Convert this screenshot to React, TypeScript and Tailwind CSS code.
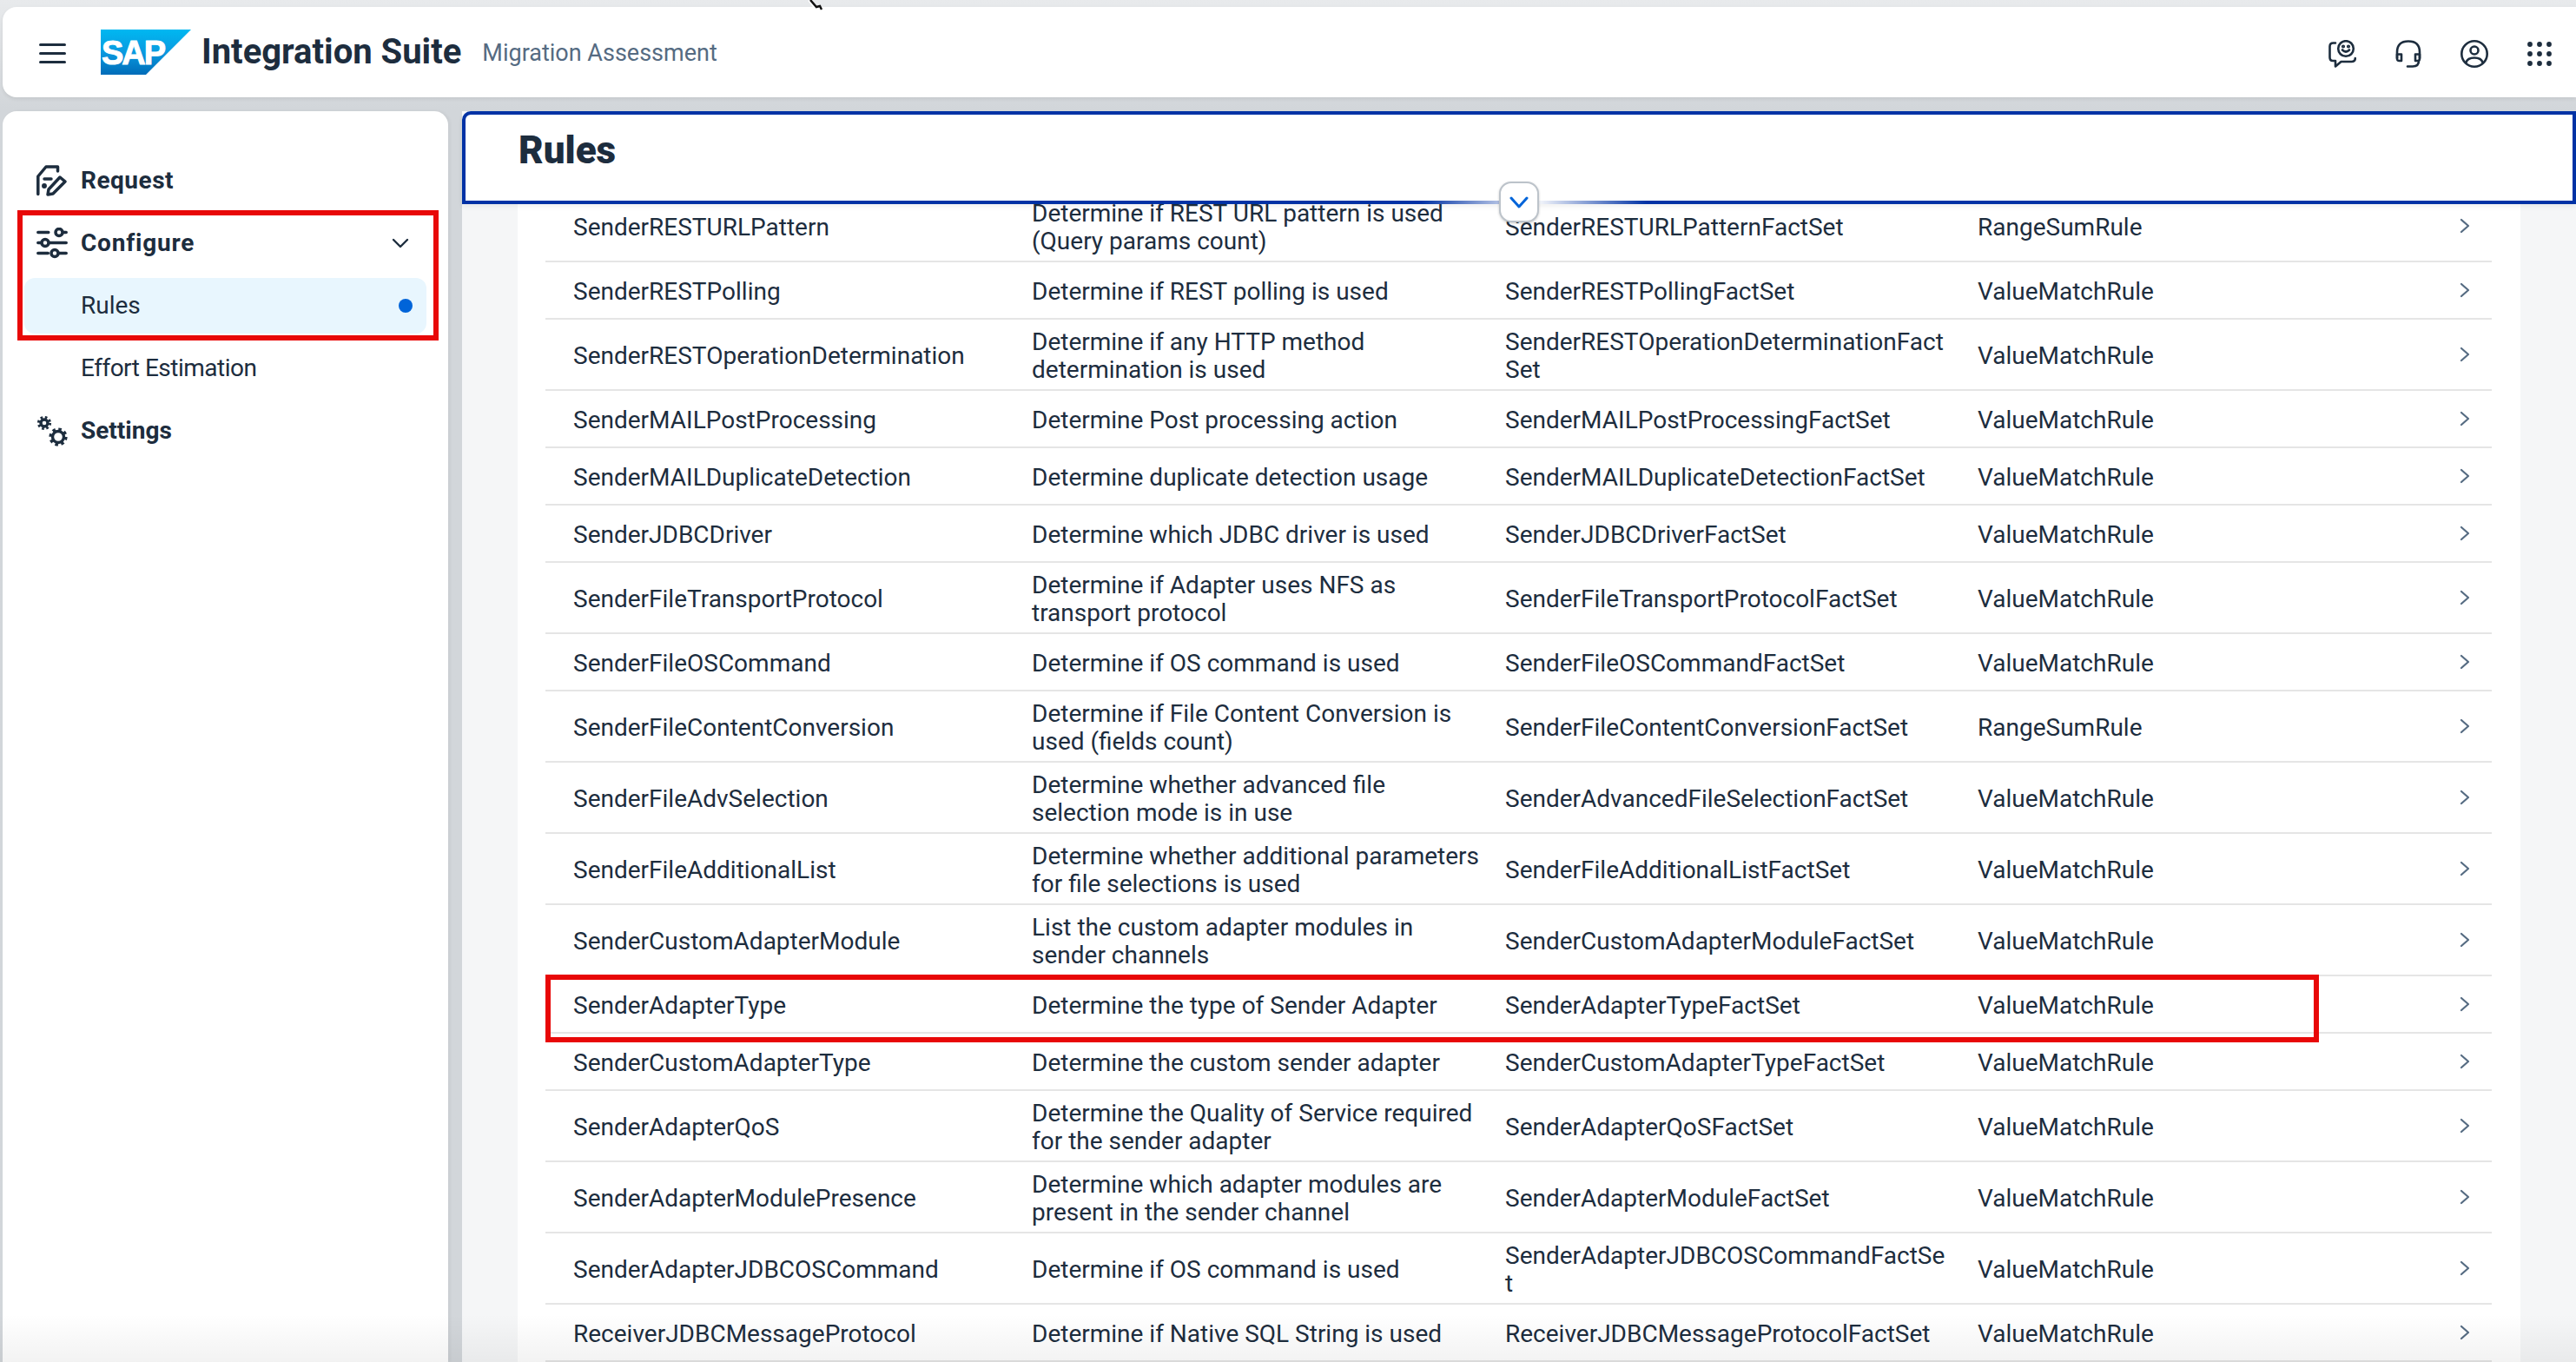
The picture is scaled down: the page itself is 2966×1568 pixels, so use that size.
import React from "react";

type Row = { a: string; b: string; c: string; d: string; tall?: boolean; mark?: boolean };

const rows: Row[] = [
  { a: "SenderRESTURLPattern", b: "Determine if REST URL pattern is used\n(Query params count)", c: "SenderRESTURLPatternFactSet", d: "RangeSumRule", tall: true },
  { a: "SenderRESTPolling", b: "Determine if REST polling is used", c: "SenderRESTPollingFactSet", d: "ValueMatchRule" },
  { a: "SenderRESTOperationDetermination", b: "Determine if any HTTP method\ndetermination is used", c: "SenderRESTOperationDeterminationFact\nSet", d: "ValueMatchRule", tall: true },
  { a: "SenderMAILPostProcessing", b: "Determine Post processing action", c: "SenderMAILPostProcessingFactSet", d: "ValueMatchRule" },
  { a: "SenderMAILDuplicateDetection", b: "Determine duplicate detection usage", c: "SenderMAILDuplicateDetectionFactSet", d: "ValueMatchRule" },
  { a: "SenderJDBCDriver", b: "Determine which JDBC driver is used", c: "SenderJDBCDriverFactSet", d: "ValueMatchRule" },
  { a: "SenderFileTransportProtocol", b: "Determine if Adapter uses NFS as\ntransport protocol", c: "SenderFileTransportProtocolFactSet", d: "ValueMatchRule", tall: true },
  { a: "SenderFileOSCommand", b: "Determine if OS command is used", c: "SenderFileOSCommandFactSet", d: "ValueMatchRule" },
  { a: "SenderFileContentConversion", b: "Determine if File Content Conversion is\nused (fields count)", c: "SenderFileContentConversionFactSet", d: "RangeSumRule", tall: true },
  { a: "SenderFileAdvSelection", b: "Determine whether advanced file\nselection mode is in use", c: "SenderAdvancedFileSelectionFactSet", d: "ValueMatchRule", tall: true },
  { a: "SenderFileAdditionalList", b: "Determine whether additional parameters\nfor file selections is used", c: "SenderFileAdditionalListFactSet", d: "ValueMatchRule", tall: true },
  { a: "SenderCustomAdapterModule", b: "List the custom adapter modules in\nsender channels", c: "SenderCustomAdapterModuleFactSet", d: "ValueMatchRule", tall: true },
  { a: "SenderAdapterType", b: "Determine the type of Sender Adapter", c: "SenderAdapterTypeFactSet", d: "ValueMatchRule", mark: true },
  { a: "SenderCustomAdapterType", b: "Determine the custom sender adapter", c: "SenderCustomAdapterTypeFactSet", d: "ValueMatchRule" },
  { a: "SenderAdapterQoS", b: "Determine the Quality of Service required\nfor the sender adapter", c: "SenderAdapterQoSFactSet", d: "ValueMatchRule", tall: true },
  { a: "SenderAdapterModulePresence", b: "Determine which adapter modules are\npresent in the sender channel", c: "SenderAdapterModuleFactSet", d: "ValueMatchRule", tall: true },
  { a: "SenderAdapterJDBCOSCommand", b: "Determine if OS command is used", c: "SenderAdapterJDBCOSCommandFactSe\nt", d: "ValueMatchRule", tall: true },
  { a: "ReceiverJDBCMessageProtocol", b: "Determine if Native SQL String is used", c: "ReceiverJDBCMessageProtocolFactSet", d: "ValueMatchRule" },
];

const stroke = { fill: "none", stroke: "#1d2d3e", strokeLinecap: "round", strokeLinejoin: "round" } as const;

function RequestIcon() {
  return (
    <svg width="36" height="36" viewBox="0 0 36 36" {...stroke} strokeWidth="3.500">
      <path d="M1.800 33.500V13L11 2h13.500v5" />
      <path d="M9 16h8" />
      <circle cx="9" cy="24" r="1.200" fill="#1d2d3e" />
      <path d="M13 34l1-6 13-14 6 5-14 14z" />
    </svg>
  );
}

function ConfigureIcon() {
  return (
    <svg width="36" height="36" viewBox="0 0 36 36" {...stroke} strokeWidth="3.500">
      <path d="M1.800 5.500h12M31 5.500h3.200" />
      <circle cx="26" cy="5.500" r="4" />
      <path d="M1.800 17.500h3.500M15 17.500h19.200" />
      <circle cx="10" cy="17.500" r="4" />
      <path d="M1.800 29.500h11.500M26 29.500h8.200" />
      <circle cx="21" cy="29.500" r="4" />
    </svg>
  );
}

function Gear({ cx, cy, r }: { cx: number; cy: number; r: number }) {
  const outer = r + 1;
  const circ = 2 * Math.PI * outer;
  return (
    <g fill="none" stroke="#1d2d3e">
      <circle cx={cx} cy={cy} r={r - 1.500} strokeWidth="3.400" />
      <circle cx={cx} cy={cy} r={outer} strokeWidth="3.200" strokeDasharray={`${circ / 16} ${circ / 16}`} />
    </g>
  );
}

function SettingsIcon() {
  return (
    <svg width="36" height="36" viewBox="0 0 36 36">
      <Gear cx={9} cy={9} r={5.500} />
      <Gear cx={25} cy={25} r={8} />
    </svg>
  );
}

function FeedbackIcon() {
  return (
    <svg width="32" height="32" viewBox="0 0 32 32" {...stroke} strokeWidth="2.600">
      <path d="M8 3.500H5.500Q1.500 3.500 1.500 7.500V20Q1.500 24 5 24H8V30.500L14.500 25H26.500Q30.800 25 30.800 21" />
      <circle cx="20" cy="10" r="8.800" />
      <path d="M16 11.500q4 4 8 0" />
      <circle cx="17" cy="7.500" r="0.800" fill="#1d2d3e" />
      <circle cx="23" cy="7.500" r="0.800" fill="#1d2d3e" />
    </svg>
  );
}

function HeadsetIcon() {
  return (
    <svg width="30" height="32" viewBox="0 0 30 32" {...stroke} strokeWidth="2.600">
      <path d="M2 21V14Q2 1.500 15 1.500T28 14V21" />
      <path d="M2 16.500H7V24H4.500Q2 24 2 21.500Z" />
      <path d="M28 16.500H23V24H25.500Q28 24 28 21.500Z" />
      <path d="M27 24Q27 30.500 20 30.500H14" />
    </svg>
  );
}

function UserIcon() {
  return (
    <svg width="32" height="32" viewBox="0 0 32 32" {...stroke} strokeWidth="2.600">
      <circle cx="16" cy="16" r="14.700" />
      <circle cx="16" cy="12" r="4.500" />
      <path d="M6.500 26Q8 20.500 16 20.500T25.500 26" />
    </svg>
  );
}

function GridIcon() {
  const pos = [3, 14, 25];
  return (
    <svg width="28" height="28" viewBox="0 0 28 28" fill="#1d2d3e">
      {pos.flatMap((y) => pos.map((x) => <circle key={`${x}-${y}`} cx={x} cy={y} r="2.900" />))}
    </svg>
  );
}

function SapLogo() {
  return (
    <div className="relative h-[52px] w-[104px] shrink-0">
      <svg width="104" height="52" viewBox="0 0 104 52" className="block">
        <defs>
          <linearGradient id="sap" x1="0" y1="0" x2="0" y2="1">
            <stop offset="0" stopColor="#00b8f1" />
            <stop offset="0.5" stopColor="#0a9ae0" />
            <stop offset="1" stopColor="#006cb8" />
          </linearGradient>
        </defs>
        <polygon points="0,0 104,0 52,52 0,52" fill="url(#sap)" />
      </svg>
      <span className="absolute left-[1px] top-[6px] text-[38px] leading-[42px] font-bold tracking-[-2px] text-white [-webkit-text-stroke:1px_white] font-['Liberation_Sans',sans-serif]">
        SAP
      </span>
    </div>
  );
}

function NavItem({ icon, label, track }: { icon: React.ReactNode; label: string; track?: string }) {
  return (
    <div className="flex h-[64px] items-center pl-[14px]">
      <div className="flex w-[51px] shrink-0 items-center">{icon}</div>
      <span className={`text-[28px] font-bold leading-none ${track ?? ""}`}>{label}</span>
    </div>
  );
}

function TableRow({ row }: { row: Row }) {
  return (
    <div className={`relative grid grid-cols-[560px_545px_544px_1fr] items-center border-b-2 border-[#e5e5e5] text-[28px] leading-[32px] ${row.tall ? "h-[82px]" : "h-[66px]"}`}>
      <div className="pl-[32px] pt-[4px]">{row.a}</div>
      <div className="whitespace-pre-line pt-[4px]">{row.b}</div>
      <div className="whitespace-pre-line pt-[4px]">{row.c}</div>
      <div className="flex items-center justify-between pr-[25px]">
        <span className="pt-[4px]">{row.d}</span>
        <svg width="12" height="18" viewBox="0 0 12 18" fill="none" stroke="#556b82" strokeWidth="2.200" strokeLinecap="round" strokeLinejoin="round">
          <path d="M2 2l8 7-8 7" />
        </svg>
      </div>
      {row.mark && <div className="absolute -top-[2px] left-0 z-10 h-[78px] w-[2042px] border-[6px] border-[#e80808]" />}
    </div>
  );
}

export default function App() {
  return (
    <div className="relative flex h-[1568px] w-full flex-col overflow-hidden bg-[#d2d6da] bg-linear-to-b from-[#e8eaec] to-[#d2d6da] to-[125px] pt-[8px] pl-[3px] text-[#1d2d3e] font-['Roboto',sans-serif]">
      <svg width="18" height="14" viewBox="0 0 18 14" className="absolute left-[930px] top-0">
        <path d="M2 0l8 10 4-1 2 4" fill="none" stroke="#ffffff" strokeWidth="4" />
        <path d="M3 0l7 8 4-1 2 4" fill="none" stroke="#111111" strokeWidth="2.500" />
      </svg>

      <header className="flex h-[104px] shrink-0 items-center rounded-l-[16px] bg-white shadow-[0_2px_4px_rgba(0,0,0,0.08)]">
        <div className="ml-[42px] mt-[2px] flex h-[23px] w-[31px] flex-col justify-between">
          <span className="h-[3px] rounded-full bg-[#1d2d3e]" />
          <span className="h-[3px] rounded-full bg-[#1d2d3e]" />
          <span className="h-[3px] rounded-full bg-[#1d2d3e]" />
        </div>
        <div className="ml-[40px]">
          <SapLogo />
        </div>
        <span className="ml-[12px] text-[40px] font-bold leading-none">Integration Suite</span>
        <span className="ml-[24px] mt-[3px] text-[27px] leading-none text-[#556b82]">Migration Assessment</span>
        <div className="ml-auto mr-[28px] mt-[4px] flex items-center gap-[45px]">
          <FeedbackIcon />
          <HeadsetIcon />
          <UserIcon />
          <GridIcon />
        </div>
      </header>

      <div className="mt-[16px] flex min-h-0 flex-1">
        <aside className="w-[513px] shrink-0 rounded-t-[16px] bg-white px-[25px] pt-[48px] shadow-[2px_0_4px_rgba(0,0,0,0.05)]">
          <div className="flex flex-col gap-[8px]">
            <NavItem icon={<RequestIcon />} label="Request" track="tracking-[0.5px]" />
            <div className="-ml-[8px] -mr-[14px] -mt-[6px] -mb-[8px] flex flex-col gap-[8px] border-[6px] border-[#e80808] pl-[2px] pr-[8px] pb-[2px]">
              <div className="flex h-[64px] items-center justify-between pl-[14px] pr-[20px]">
                <div className="flex items-center">
                  <div className="flex w-[51px] shrink-0 items-center">
                    <ConfigureIcon />
                  </div>
                  <span className="text-[28px] font-bold leading-none tracking-[0.8px]">Configure</span>
                </div>
                <svg width="20" height="14" viewBox="0 0 20 14" fill="none" stroke="#1d2d3e" strokeWidth="2.400" strokeLinecap="round" strokeLinejoin="round">
                  <path d="M2 3l8 8 8-8" />
                </svg>
              </div>
              <div className="flex h-[64px] items-center justify-between rounded-[12px] bg-[#e8f6fe] pl-[65px] pr-[16px]">
                <span className="text-[28px] leading-none">Rules</span>
                <span className="size-[16px] rounded-full bg-[#0064d9]" />
              </div>
            </div>
            <div className="flex h-[64px] items-center pl-[65px]">
              <span className="text-[28px] leading-none tracking-[-0.5px]">Effort Estimation</span>
            </div>
            <NavItem icon={<SettingsIcon />} label="Settings" />
          </div>
        </aside>

        <main className="ml-[16px] flex min-w-0 flex-1 flex-col bg-[#f5f6f7]">
          <div className="relative z-20 flex h-[107px] shrink-0 items-center rounded-tl-[10px] border-4 border-[#0032a5] bg-white pb-[18px] pl-[61px] shadow-[0_3px_6px_rgba(0,0,0,0.06)]">
            <h1 className="text-[44px] font-black leading-none">Rules</h1>
            <div className="absolute -bottom-[4px] left-[1100px] h-[4px] w-[260px] bg-linear-to-r from-transparent via-white via-50% to-transparent" />
            <div className="absolute -bottom-[25px] left-[1190px] flex h-[47px] w-[46px] items-center justify-center rounded-[14px] border-2 border-[#bcc3ca] bg-white shadow-[0_1px_3px_rgba(0,0,0,0.2)]">
              <svg width="22" height="14" viewBox="0 0 22 14" fill="none" stroke="#0064d9" strokeWidth="3" strokeLinecap="round" strokeLinejoin="round">
                <path d="M2 2l9 10 9-10" />
              </svg>
            </div>
          </div>
          <div className="-mt-[15px] ml-[64px] mr-[64px] min-h-0 flex-1 bg-white px-[32px] pr-[33px]">
            {rows.map((r) => (
              <TableRow key={r.a} row={r} />
            ))}
          </div>
        </main>
      </div>

      <div className="pointer-events-none absolute inset-x-0 bottom-0 z-30 h-[55px] bg-linear-to-t from-black/5 to-transparent" />
    </div>
  );
}
